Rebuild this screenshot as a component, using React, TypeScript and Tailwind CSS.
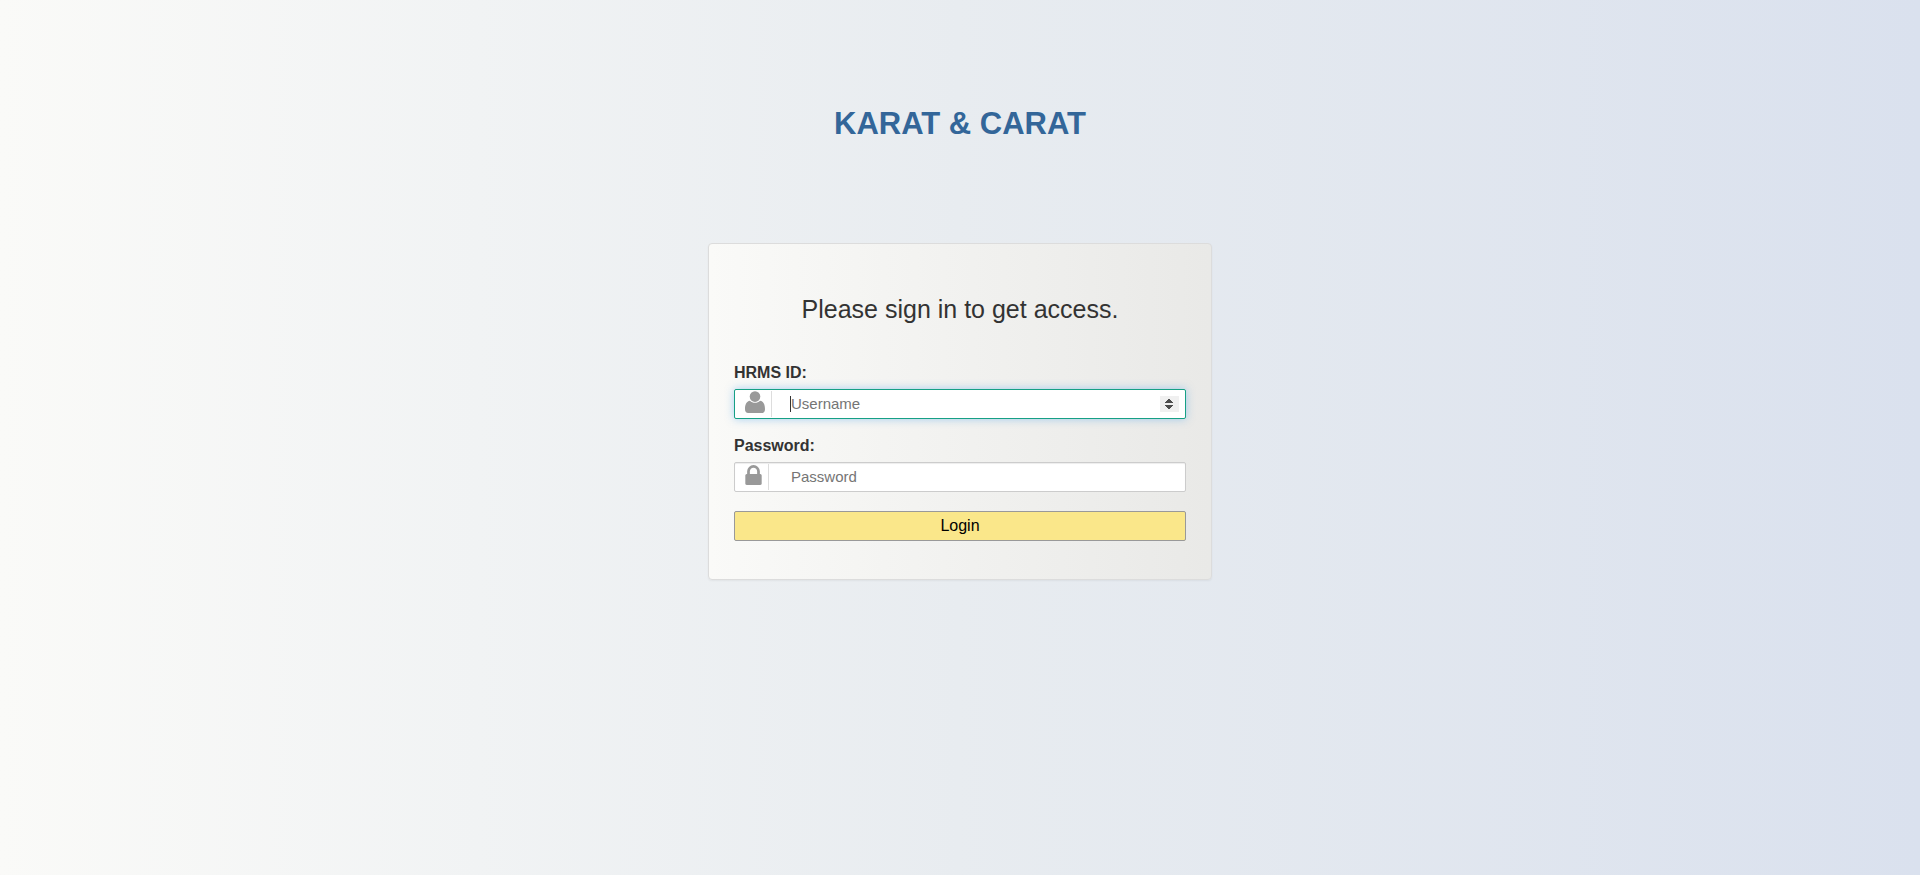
import type { ReactNode } from 'react';

function UserIcon() {
  return (
    <svg width="20" height="22" viewBox="0 0 20 22" fill="#999999" aria-hidden="true">
      <circle cx="10" cy="5.6" r="5.3" />
      <path d="M5 9.8C1.3 10.2 0 14 0 18.2C0 20.6 1.2 22 3.2 22H16.8C18.8 22 20 20.6 20 18.2C20 14 18.7 10.2 15 9.8C13.6 11.2 12 11.8 10 11.8C8 11.8 6.4 11.2 5 9.8Z" />
    </svg>
  );
}

function LockIcon() {
  return (
    <svg className="mt-px" width="17" height="20" viewBox="320 128 1152 1408" fill="#999999" aria-hidden="true">
      <path d="M640 768h512v-192q0-106-75-181t-181-75-181 75-75 181v192zm832 96v576q0 40-28 68t-68 28h-960q-40 0-68-28t-28-68v-576q0-40 28-68t68-28h32v-192q0-184 132-316t316-132 316 132 132 316v192h32q40 0 68 28t28 68z" />
    </svg>
  );
}

function Stepper() {
  return (
    <button type="button" tabIndex={-1} aria-label="Change value" className="mr-1.5 flex h-4 w-[19px] shrink-0 items-center justify-center bg-[#f0f0f0]">
      <svg width="9" height="10" viewBox="0 0 9 10" fill="#4d4d4d" shapeRendering="crispEdges" aria-hidden="true">
        <path d="M3 0h2v1h1v1h1v1h1v1H0V3h1V2h1V1h1z" />
        <path d="M0 6h8v1H7v1H6v1H5v1H3V9H2V8H1V7H0z" />
      </svg>
    </button>
  );
}

function IconCell({ children }: { children: ReactNode }) {
  return <span className="my-px flex h-[26px] shrink-0 items-start border-r border-[#dddddd] pr-1.5 pl-2.5">{children}</span>;
}

const inputClass =
  'min-w-0 flex-1 bg-transparent text-[15px] leading-5 text-[#333333] outline-none placeholder:text-[#757575]';

export default function App() {
  return (
    <main className="flex min-h-screen flex-col items-center bg-linear-to-r from-[#fafaf8] via-[#e8ecf0] to-[#dae1ee] px-4 pt-[106px] pb-10 font-['Liberation_Sans',Arial,sans-serif] text-[#333333]">
      <h1 className="text-[31px] leading-9 font-bold text-[#336699]">KARAT &amp; CARAT</h1>

      <form
        onSubmit={(e) => e.preventDefault()}
        className="mt-[101px] w-full max-w-[504px] rounded-[4px] border border-[#dcdcdc] bg-linear-to-r from-[#fafaf8] to-[#e9e9e7] px-[25px] pt-[49px] pb-[38px] shadow-[0_1px_2px_rgba(0,0,0,0.05)]"
      >
        <h2 className="text-center text-[25px] leading-8">Please sign in to get access.</h2>

        <label htmlFor="hrms-id" className="mt-[38px] block text-base leading-5 font-bold">
          HRMS ID:
        </label>
        <div className="group mt-1.5 flex h-[30px] items-center rounded-[2px] border border-[#16a085] bg-white shadow-[0_0_8px_rgba(82,168,236,0.5)]">
          <IconCell>
            <UserIcon />
          </IconCell>
          {/* Caret shown while the focused field is still empty */}
          <span className="invisible ml-[18px] h-4 w-px bg-[#333333] group-has-[input:focus:placeholder-shown]:visible" aria-hidden="true" />
          <input
            id="hrms-id"
            type="text"
            inputMode="numeric"
            autoFocus
            placeholder="Username"
            className={`${inputClass} placeholder-shown:caret-transparent`}
          />
          <Stepper />
        </div>

        <label htmlFor="password" className="mt-[17px] block text-base leading-5 font-bold">
          Password:
        </label>
        <div className="mt-1.5 flex h-[30px] items-center rounded-[2px] border border-[#cccccc] bg-white shadow-[inset_0_1px_1px_rgba(0,0,0,0.075)]">
          <IconCell>
            <LockIcon />
          </IconCell>
          <input id="password" type="password" placeholder="Password" className={`${inputClass} ml-[22px]`} />
        </div>

        <button type="submit" className="mt-[19px] block h-[30px] w-full rounded-[2px] border border-[#999999] bg-[#fae78a] text-base leading-5 text-black">
          Login
        </button>
      </form>
    </main>
  );
}
